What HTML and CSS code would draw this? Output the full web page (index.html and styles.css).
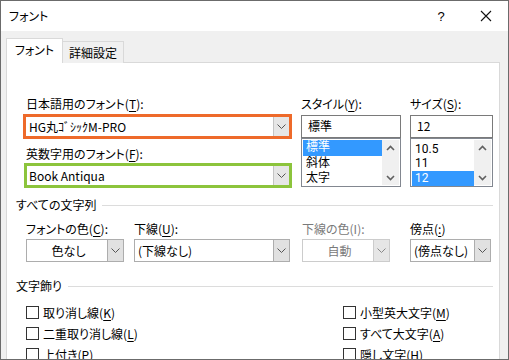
FILE: index.html
```html
<!DOCTYPE html>
<html lang="ja">
<head>
  <meta charset="UTF-8">
  <title>フォント</title>
  <link rel="stylesheet" href="styles.css">
</head>
<body>
  <div class="ventana">
    <div class="titulo">
      <span class="titulo-texto">フォント</span>
      <span class="ayuda">?</span>
      <span class="cerrar">
        <svg width="12" height="12" viewBox="0 0 12 12"><path d="M1 1 L11 11 M11 1 L1 11" stroke="#111" stroke-width="1.1" fill="none"/></svg>
      </span>
    </div>

    <div class="cliente">
      <div class="pestanas">
        <div class="pestana activa">フォント</div>
        <div class="pestana">詳細設定</div>
      </div>

      <div class="panel">
        <div class="fuentes">
          <div class="col-nombre">
            <div class="etiqueta">日本語用のフォント(<u>T</u>):</div>
            <div class="combo marco-naranja">
              <span class="combo-texto">HG丸ｺﾞｼｯｸM-PRO</span>
              <span class="flecha"><svg width="9" height="5" viewBox="0 0 9 5"><path d="M0.5 0.5 L4.5 4.5 L8.5 0.5" stroke="#555" fill="none"/></svg></span>
            </div>
            <div class="etiqueta segunda">英数字用のフォント(<u>F</u>):</div>
            <div class="combo marco-verde">
              <span class="combo-texto">Book Antiqua</span>
              <span class="flecha"><svg width="9" height="5" viewBox="0 0 9 5"><path d="M0.5 0.5 L4.5 4.5 L8.5 0.5" stroke="#555" fill="none"/></svg></span>
            </div>
          </div>

          <div class="col-estilo">
            <div class="etiqueta">スタイル(<u>Y</u>):</div>
            <div class="caja">標準</div>
            <div class="lista">
              <ul>
                <li class="sel">標準</li>
                <li>斜体</li>
                <li>太字</li>
              </ul>
              <div class="barra">
                <svg width="9" height="6" viewBox="0 0 9 6"><path d="M1 5 L4.5 1.5 L8 5" stroke="#606060" stroke-width="1.6" fill="none"/></svg>
                <svg width="9" height="6" viewBox="0 0 9 6"><path d="M1 1 L4.5 4.5 L8 1" stroke="#606060" stroke-width="1.6" fill="none"/></svg>
              </div>
            </div>
          </div>

          <div class="col-tamano">
            <div class="etiqueta">サイズ(<u>S</u>):</div>
            <div class="caja">12</div>
            <div class="lista">
              <ul>
                <li>10.5</li>
                <li>11</li>
                <li class="sel">12</li>
              </ul>
              <div class="barra">
                <svg width="9" height="6" viewBox="0 0 9 6"><path d="M1 5 L4.5 1.5 L8 5" stroke="#606060" stroke-width="1.6" fill="none"/></svg>
                <svg width="9" height="6" viewBox="0 0 9 6"><path d="M1 1 L4.5 4.5 L8 1" stroke="#606060" stroke-width="1.6" fill="none"/></svg>
              </div>
            </div>
          </div>
        </div>

        <div class="grupo"><span>すべての文字列</span></div>

        <div class="fila-combos">
          <div class="campo ancho-color">
            <div class="etiqueta">フォントの色(<u>C</u>):</div>
            <div class="combo normal centrado">
              <span class="combo-texto">色なし</span>
              <span class="flecha"><svg width="9" height="5" viewBox="0 0 9 5"><path d="M0.5 0.5 L4.5 4.5 L8.5 0.5" stroke="#555" fill="none"/></svg></span>
            </div>
          </div>
          <div class="campo ancho-subrayado">
            <div class="etiqueta">下線(<u>U</u>):</div>
            <div class="combo normal">
              <span class="combo-texto">(下線なし)</span>
              <span class="flecha"><svg width="9" height="5" viewBox="0 0 9 5"><path d="M0.5 0.5 L4.5 4.5 L8.5 0.5" stroke="#555" fill="none"/></svg></span>
            </div>
          </div>
          <div class="campo ancho-colorsub desactivado">
            <div class="etiqueta">下線の色(I):</div>
            <div class="combo normal centrado">
              <span class="combo-texto">自動</span>
              <span class="flecha"><svg width="9" height="5" viewBox="0 0 9 5"><path d="M0.5 0.5 L4.5 4.5 L8.5 0.5" stroke="#888" fill="none"/></svg></span>
            </div>
          </div>
          <div class="campo ancho-punto">
            <div class="etiqueta">傍点(<u>:</u>)</div>
            <div class="combo normal">
              <span class="combo-texto">(傍点なし)</span>
              <span class="flecha"><svg width="9" height="5" viewBox="0 0 9 5"><path d="M0.5 0.5 L4.5 4.5 L8.5 0.5" stroke="#555" fill="none"/></svg></span>
            </div>
          </div>
        </div>

        <div class="grupo grupo-adornos"><span>文字飾り</span></div>

        <div class="casillas">
          <div class="casilla"><span class="cuadro"></span>取り消し線(<u>K</u>)</div>
          <div class="casilla"><span class="cuadro"></span>小型英大文字(<u>M</u>)</div>
          <div class="casilla"><span class="cuadro"></span>二重取り消し線(<u>L</u>)</div>
          <div class="casilla"><span class="cuadro"></span>すべて大文字(<u>A</u>)</div>
          <div class="casilla"><span class="cuadro"></span>上付き(<u>P</u>)</div>
          <div class="casilla"><span class="cuadro"></span>隠し文字(<u>H</u>)</div>
        </div>
      </div>
    </div>
  </div>
</body>
</html>
```

FILE: styles.css
```css
body {
  margin: 0;
  font-family: "Noto Sans CJK JP", "Noto Sans", sans-serif;
  font-size: 12px;
  font-feature-settings: "palt";
  color: #000;
  background: #fff;
}

.ventana {
  width: 509px;
  height: 360px;
  box-sizing: border-box;
  border: 1px solid #6b6b6b;
  overflow: hidden;
  background: #f0f0f0;
}

.titulo {
  height: 30px;
  background: #fff;
  display: flex;
  align-items: center;
  padding-left: 8px;
}

.titulo-texto {
  flex: 1;
  line-height: 16px;
}

.ayuda {
  width: 16px;
  text-align: center;
  font-family: "Liberation Sans", sans-serif;
  font-size: 13px;
  margin-right: 31px;
}

.cerrar {
  width: 12px;
  height: 12px;
  margin-right: 16px;
  display: flex;
}

.cliente {
  padding: 8px 8px 0 5px;
}

.pestanas {
  display: flex;
  align-items: flex-end;
  height: 24px;
  position: relative;
  z-index: 1;
  margin-bottom: -1px;
}

.pestana {
  width: 62px;
  height: 22px;
  box-sizing: border-box;
  border: 1px solid #d9d9d9;
  border-bottom: none;
  background: #f0f0f0;
  text-align: center;
  line-height: 21px;
}

.pestana.activa {
  width: 57px;
  height: 25px;
  background: #fff;
  line-height: 22px;
  margin-right: -1px;
}

.panel {
  background: #fff;
  border: 1px solid #d9d9d9;
  border-bottom: none;
  height: 320px;
  box-sizing: border-box;
  padding: 33px 5px 0 19px;
}

.etiqueta {
  line-height: 16px;
  height: 16px;
  white-space: nowrap;
}

u {
  text-decoration-thickness: 1px;
  text-underline-offset: 2px;
}

.fuentes {
  display: flex;
  height: 91px;
}

.col-nombre {
  width: 263px;
  margin-right: 12px;
}

.col-estilo {
  width: 100px;
  margin-right: 9px;
}

.col-tamano {
  width: 83px;
}

.combo {
  display: flex;
  align-items: stretch;
  box-sizing: border-box;
  background: #fff;
}

.combo-texto {
  flex: 1;
  display: flex;
  align-items: center;
  padding-left: 3px;
  white-space: nowrap;
}

.flecha {
  width: 15px;
  display: flex;
  align-items: center;
  justify-content: center;
  background: #e6e6e6;
  border-left: 1px solid #c4c4c4;
}

.marco-naranja {
  border: 3px solid #ee6a2a;
  height: 25px;
  margin: 2px -3px 0 -3px;
}

.marco-verde {
  border: 3px solid #8cc43c;
  height: 25px;
  margin: 1px -3px 0 -2px;
}

.marco-verde .combo-texto {
  padding-left: 2px;
}

.etiqueta.segunda {
  margin-top: 7px;
}

.caja {
  margin-top: 3px;
  height: 23px;
  box-sizing: border-box;
  border: 1px solid #7a7a7a;
  padding-left: 6px;
  line-height: 20px;
}

.lista {
  height: 49px;
  box-sizing: border-box;
  border: 1px solid #828790;
  display: flex;
  padding: 1px;
  font-family: Roboto, "Noto Sans CJK JP", sans-serif;
}

.lista ul {
  list-style: none;
  margin: 0;
  padding: 0;
  flex: 1;
}

.lista li {
  height: 15px;
  line-height: 15px;
  padding-left: 3px;
}

.lista li:first-child {
  height: 16px;
}

.lista li.sel {
  background: #3399ff;
  color: #fff;
}

.col-tamano .lista li:first-child {
  padding-top: 2px;
  height: 14px;
}

.barra {
  width: 17px;
  background: #f0f0f0;
  display: flex;
  flex-direction: column;
  justify-content: space-between;
  align-items: center;
  padding: 5px 0 4px;
}

.grupo {
  display: flex;
  align-items: center;
  margin: 10px 1px 0 -10px;
  height: 16px;
  line-height: 16px;
}

.grupo::after {
  content: "";
  flex: 1;
  height: 1px;
  background: #dcdcdc;
  margin-left: 6px;
}

.grupo-adornos {
  margin-top: 16px;
}

.fila-combos {
  display: flex;
  margin-top: 8px;
}

.campo .combo {
  margin-top: 2px;
}

.normal {
  height: 23px;
  border: 1px solid #adadad;
}

.normal .flecha {
  background: #e1e1e1;
  border-left: 1px solid #adadad;
}

.centrado .combo-texto {
  justify-content: center;
}

.ancho-color {
  width: 98px;
  margin-right: 10px;
}

.ancho-subrayado {
  width: 156px;
  margin-right: 12px;
}

.ancho-colorsub {
  width: 88px;
  margin-right: 20px;
}

.ancho-punto {
  width: 81px;
}

.desactivado {
  color: #7a7a7a;
}

.desactivado .normal {
  border-color: #cccccc;
}

.desactivado .flecha {
  background: #e6e6e6;
  border-left-color: #cccccc;
}

.casillas {
  display: grid;
  grid-template-columns: 317px 1fr;
  row-gap: 5px;
  margin-top: 10px;
}

.casilla {
  display: flex;
  align-items: center;
  height: 16px;
  white-space: nowrap;
}

.cuadro {
  width: 13px;
  height: 13px;
  box-sizing: border-box;
  border: 1px solid #333;
  background: #fff;
  margin-right: 4px;
}
```
